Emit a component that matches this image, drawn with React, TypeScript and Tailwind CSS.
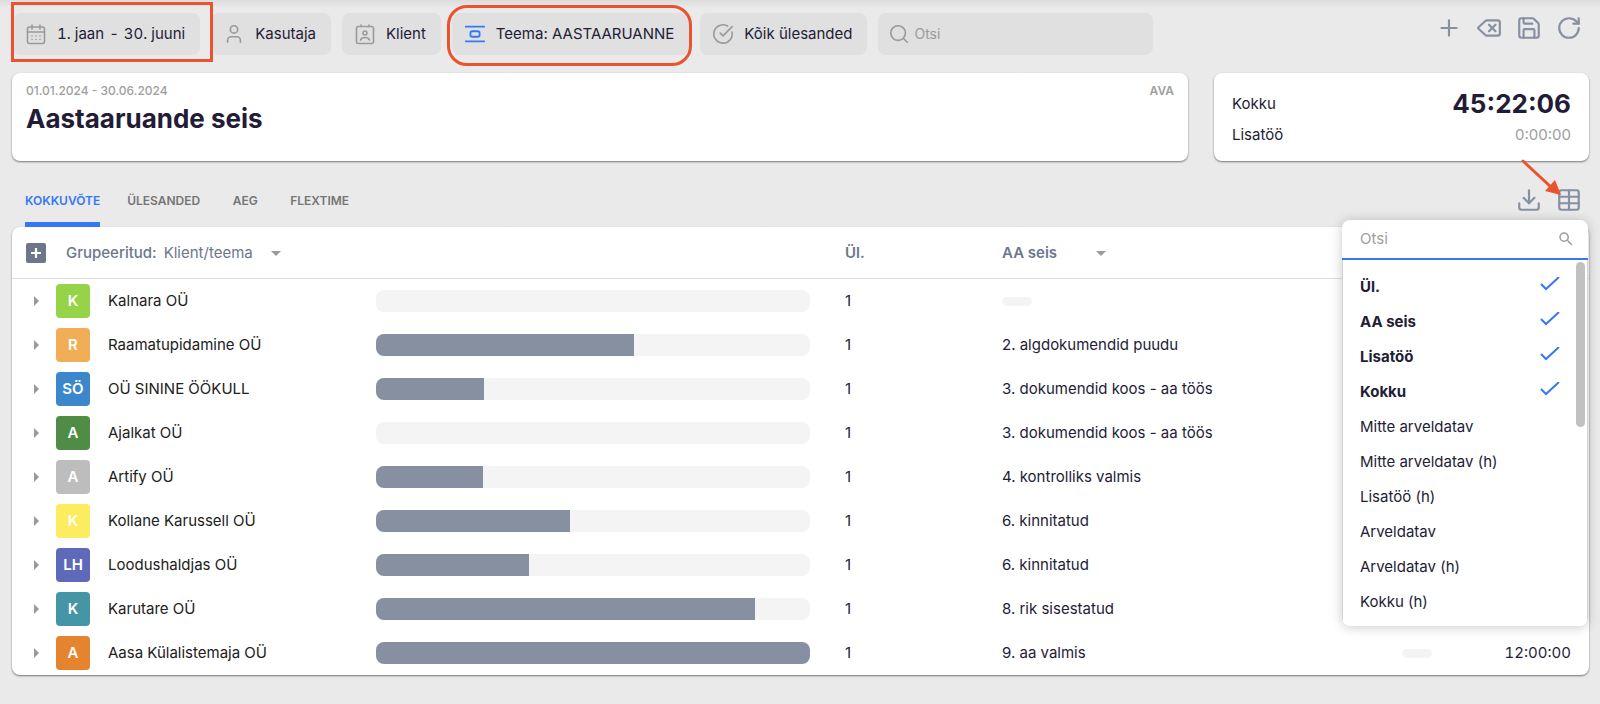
import { ReactNode } from 'react'
import {
  AlignVerticalSpaceAround,
  CircleCheckBig,
  Delete,
  Download,
  Plus,
  RotateCw,
  Save,
  Search,
  Table,
  User,
} from 'lucide-react'
import { MdArrowDropDown, MdArrowRight, MdSearch } from 'react-icons/md'

type Row = {
  initials: string
  color: string
  name: string
  percent: number
  status?: string
  total?: string
}

const rows: Row[] = [
  { initials: 'K', color: 'bg-[#95d348]', name: 'Kalnara OÜ', percent: 0 },
  { initials: 'R', color: 'bg-[#f2ae57]', name: 'Raamatupidamine OÜ', percent: 59.4, status: '2. algdokumendid puudu' },
  { initials: 'SÖ', color: 'bg-[#3c87cb]', name: 'OÜ SININE ÖÖKULL', percent: 24.9, status: '3. dokumendid koos - aa töös' },
  { initials: 'A', color: 'bg-[#4f8c45]', name: 'Ajalkat OÜ', percent: 0, status: '3. dokumendid koos - aa töös' },
  { initials: 'A', color: 'bg-[#bdbdbd]', name: 'Artify OÜ', percent: 24.6, status: '4. kontrolliks valmis' },
  { initials: 'K', color: 'bg-[#fcec60]', name: 'Kollane Karussell OÜ', percent: 44.7, status: '6. kinnitatud' },
  { initials: 'LH', color: 'bg-[#5f69b9]', name: 'Loodushaldjas OÜ', percent: 35.2, status: '6. kinnitatud' },
  { initials: 'K', color: 'bg-[#4495a6]', name: 'Karutare OÜ', percent: 87.3, status: '8. rik sisestatud' },
  { initials: 'A', color: 'bg-[#e6832f]', name: 'Aasa Külalistemaja OÜ', percent: 100, status: '9. aa valmis', total: '12:00:00' },
]

const columns = [
  { label: 'Ül.', checked: true },
  { label: 'AA seis', checked: true },
  { label: 'Lisatöö', checked: true },
  { label: 'Kokku', checked: true },
  { label: 'Mitte arveldatav', checked: false },
  { label: 'Mitte arveldatav (h)', checked: false },
  { label: 'Lisatöö (h)', checked: false },
  { label: 'Arveldatav', checked: false },
  { label: 'Arveldatav (h)', checked: false },
  { label: 'Kokku (h)', checked: false },
]

const cardShadow = 'shadow-[0_1px_2px_rgba(0,0,0,0.5)]'

const CalendarIcon = () => (
  <svg width="22" height="22" viewBox="0 0 22 22" fill="none" stroke="currentColor" strokeWidth="1.6" strokeLinecap="round">
    <rect x="2.5" y="4" width="17" height="16.5" rx="2" />
    <path d="M2.5 9h17M7 2v4M15 2v4" />
    <path d="M7 13h.01M11 13h.01M15 13h.01M7 16.5h.01M11 16.5h.01M15 16.5h.01" />
  </svg>
)

const ClientIcon = () => (
  <svg width="22" height="22" viewBox="0 0 22 22" fill="none" stroke="currentColor" strokeWidth="1.6" strokeLinecap="round">
    <rect x="2.5" y="3.5" width="17" height="17" rx="2" />
    <path d="M7 2v1.5M15 2v1.5" />
    <circle cx="11" cy="10" r="2" />
    <path d="M6.5 17c.5-1.8 2.2-2.5 4.5-2.5s4 .7 4.5 2.5" />
  </svg>
)

const Filter = ({ icon, children }: { icon: ReactNode; children: ReactNode }) => (
  <button
    type="button"
    className="flex h-[42px] items-center gap-[10px] rounded-lg bg-[#e0e0e0] pr-[15px] pl-3 whitespace-nowrap text-[#9a9a9a]"
  >
    {icon}
    <span className="text-[#231c36]">{children}</span>
  </button>
)

const IconButton = ({ label, children }: { label: string; children: ReactNode }) => (
  <button type="button" aria-label={label} className="text-[#8790a1]">
    {children}
  </button>
)

const Tab = ({ active, children }: { active?: boolean; children: ReactNode }) => (
  <button
    type="button"
    className={
      active
        ? 'h-full border-b-[5px] border-[#3478f6] pt-[6px] text-[#3478f6]'
        : 'h-full min-w-9 border-b-[5px] border-transparent pt-[6px] text-[#757575]'
    }
  >
    {children}
  </button>
)

const Empty = () => <span className="block h-[9px] w-[30px] rounded-full bg-[#f4f4f4]" />

const ColumnMenu = () => (
  <div className="absolute top-[33px] -right-[6px] z-10 w-[246px] overflow-hidden rounded-lg bg-white shadow-[0_1px_12px_rgba(0,0,0,0.22)]">
    <label className="flex h-10 items-center border-b-2 border-[#3478f6] pr-[13px] pl-[18px]">
      <input
        type="text"
        placeholder="Otsi"
        aria-label="Otsi veergu"
        className="w-full min-w-0 flex-1 outline-none placeholder:text-[#9e9e9e]"
      />
      <MdSearch size={18} className="text-[#9e9e9e]" />
    </label>
    <div className="flex border-x border-[#d4d4d4]">
      <ul className="flex-1 pt-[9px] pb-[7px]">
        {columns.map((column) => (
          <li key={column.label}>
            <button type="button" className="flex h-[35px] w-full items-center justify-between pr-4 pl-[17px] text-left">
              <span className={column.checked ? 'font-bold' : ''}>{column.label}</span>
              {column.checked && (
                <svg width="20" height="20" viewBox="0 0 20 20" fill="none" stroke="#3478f6" strokeWidth="2">
                  <path d="M1 7l5 5L19 0" />
                </svg>
              )}
            </button>
          </li>
        ))}
      </ul>
      <div className="w-[11px] pt-[2px]">
        <div className="h-[165px] w-[9px] rounded-full bg-[#c1c1c1]" />
      </div>
    </div>
  </div>
)

export default function App() {
  return (
    <div className="min-h-screen bg-gradient-to-b from-[#dcdcdc] to-[#eaeaea] to-[8px] pt-[13px] pr-[11px] pb-7 pl-3 font-['Inter',sans-serif] text-[15px] leading-5 text-[#231c36]">
      <header className="flex items-start justify-between pl-px">
        <div className="flex gap-[11px]">
          <div className="relative">
            <Filter icon={<CalendarIcon />}>
              <span className="flex gap-[5px] tabular-nums">
                <span>1. jaan</span>
                <span>-</span>
                <span>30. juuni</span>
              </span>
            </Filter>
            <div className="pointer-events-none absolute -top-[11px] -right-[13px] -bottom-[7px] -left-[2px] border-3 border-[#ea532d]" />
          </div>
          <Filter icon={<User size={22} strokeWidth={1.8} />}>Kasutaja</Filter>
          <Filter icon={<ClientIcon />}>Klient</Filter>
          <div className="relative">
            <Filter icon={<AlignVerticalSpaceAround size={22} strokeWidth={2} className="text-[#3478f6]" />}>
              Teema: AASTAARUANNE
            </Filter>
            <div className="pointer-events-none absolute -top-2 -right-[3px] -bottom-[11px] -left-[5px] rounded-[20px] border-3 border-[#ea532d]" />
          </div>
          <Filter icon={<CircleCheckBig size={22} strokeWidth={1.8} />}>Kõik ülesanded</Filter>
          <label className="flex h-[42px] w-[275px] items-center gap-1 rounded-lg bg-[#e0e0e0] px-[10px] text-[#9a9a9a]">
            <Search size={22} strokeWidth={1.8} />
            <input
              type="text"
              placeholder="Otsi"
              aria-label="Otsi"
              className="min-w-0 flex-1 text-sm outline-none placeholder:text-[#9a9a9a]"
            />
          </label>
        </div>
        <div className="flex gap-[14px] pt-[2px] pr-[7px]">
          <IconButton label="Lisa"><Plus size={26} strokeWidth={2} /></IconButton>
          <IconButton label="Tühjenda"><Delete size={26} strokeWidth={2} /></IconButton>
          <IconButton label="Salvesta"><Save size={26} strokeWidth={2} /></IconButton>
          <IconButton label="Värskenda"><RotateCw size={26} strokeWidth={2} /></IconButton>
        </div>
      </header>

      <div className="mt-[18px] flex gap-[26px]">
        <section className={`flex h-[88px] flex-1 justify-between rounded-lg bg-white px-[14px] pt-2 ${cardShadow}`}>
          <div>
            <p className="text-xs leading-5 font-medium text-[#9e9e9e]">01.01.2024 - 30.06.2024</p>
            <h1 className="text-[26px] leading-9 font-bold">Aastaaruande seis</h1>
          </div>
          <a href="#ava" className="text-xs leading-5 font-semibold text-[#9e9e9e]">AVA</a>
        </section>
        <section className={`h-[88px] w-[375px] rounded-lg bg-white px-[18px] pt-[13px] ${cardShadow}`}>
          <div className="flex h-9 items-center justify-between">
            <span>Kokku</span>
            <span className="text-[26px] font-bold">45:22:06</span>
          </div>
          <div className="flex h-[26px] items-center justify-between">
            <span>Lisatöö</span>
            <span className="text-[#9e9e9e]">0:00:00</span>
          </div>
        </section>
      </div>

      <div className="flex h-[66px] items-end justify-between">
        <nav className="flex h-[54px] gap-[27px] pl-[13px] text-xs font-semibold">
          <Tab active>KOKKUVÕTE</Tab>
          <Tab>ÜLESANDED</Tab>
          <Tab>AEG</Tab>
          <Tab>FLEXTIME</Tab>
        </nav>
        <div className="relative flex gap-[14px] pr-[7px] pb-[14px]">
          <IconButton label="Laadi alla"><Download size={26} strokeWidth={2} /></IconButton>
          <div className="relative flex">
            <IconButton label="Veerud"><Table size={26} strokeWidth={2} /></IconButton>
            <ColumnMenu />
          </div>
          <svg className="pointer-events-none absolute right-[27px] bottom-[31px]" width="42" height="38" viewBox="0 0 42 38">
            <path d="M3 3L31 29" stroke="#ea532d" strokeWidth="3" strokeLinecap="round" />
            <path d="M41 37L25 33L35 22Z" fill="#ea532d" />
          </svg>
        </div>
      </div>

      <main className={`rounded-lg bg-white ${cardShadow}`}>
        <table className="w-full table-fixed border-separate border-spacing-0 text-left">
          <colgroup>
            <col className="w-[364px]" />
            <col />
            <col className="w-[157px]" />
            <col className="w-[400px]" />
            <col className="w-[60px]" />
            <col className="w-[127px]" />
          </colgroup>
          <thead className="text-[#6b778d]">
            <tr className="h-[52px] [&>th]:border-b [&>th]:border-[#dedede]">
              <th colSpan={2} className="pl-[14px] font-normal">
                <div className="flex items-center">
                  <button type="button" aria-label="Ava kõik">
                    <svg width="20" height="20" viewBox="0 0 20 20">
                      <rect width="20" height="20" rx="2" fill="#6e778a" />
                      <path d="M10 5v10M5 10h10" stroke="#fff" strokeWidth="2.2" />
                    </svg>
                  </button>
                  <button type="button" className="ml-5 flex items-center">
                    <span className="font-medium">Grupeeritud:</span>
                    <span className="ml-[7px]">Klient/teema</span>
                    <MdArrowDropDown size={24} className="ml-[11px] text-[#9a9a9a]" />
                  </button>
                </div>
              </th>
              <th className="font-semibold">Ül.</th>
              <th className="font-semibold">
                <button type="button" className="flex items-center gap-8">
                  AA seis
                  <MdArrowDropDown size={24} className="text-[#9a9a9a]" />
                </button>
              </th>
              <th />
              <th />
            </tr>
          </thead>
          <tbody>
            {rows.map((row) => (
              <tr key={row.name} className="h-11">
                <td className="pl-3">
                  <div className="flex items-center text-[#212121]">
                    <button type="button" aria-label={`Ava ${row.name}`} className="text-[#9a9a9a]">
                      <MdArrowRight size={24} />
                    </button>
                    <span className={`ml-2 flex size-[34px] items-center justify-center rounded font-semibold text-white ${row.color}`}>
                      {row.initials}
                    </span>
                    <span className="ml-[18px]">{row.name}</span>
                  </div>
                </td>
                <td className="pr-[35px]">
                  <div className="h-[22px] overflow-hidden rounded-lg bg-[#f4f4f4]">
                    <div className="h-full bg-[#8790a1]" style={{ width: `${row.percent}%` }} />
                  </div>
                </td>
                <td>1</td>
                <td>{row.status ?? <Empty />}</td>
                <td>{row.total && <Empty />}</td>
                <td className="pr-[18px] text-right tabular-nums">{row.total}</td>
              </tr>
            ))}
          </tbody>
        </table>
      </main>
    </div>
  )
}
